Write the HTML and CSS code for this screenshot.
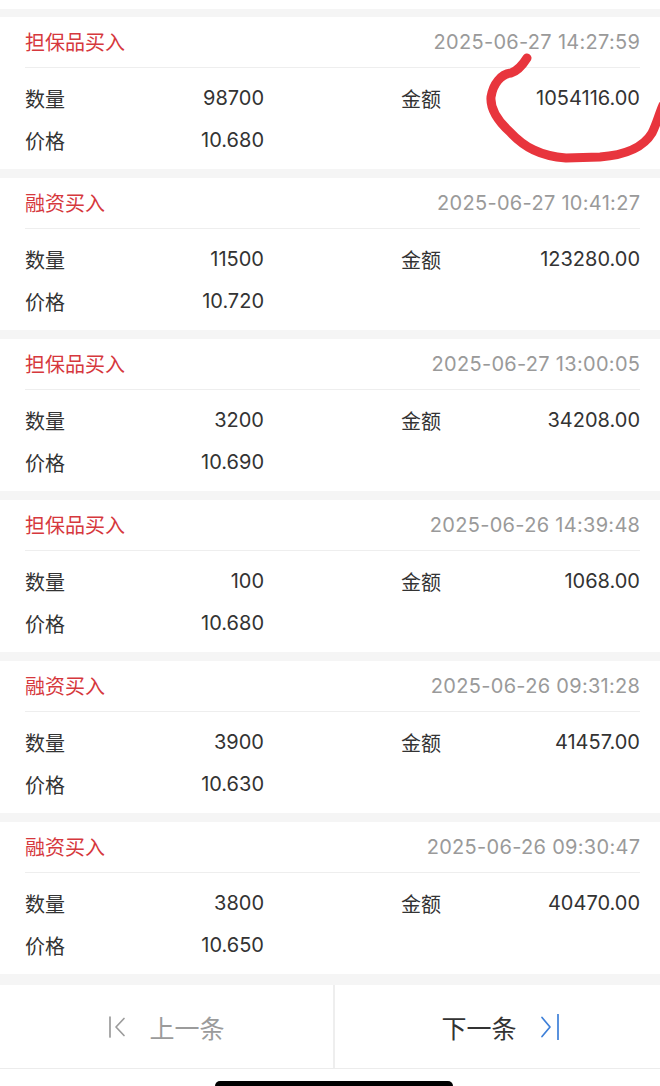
FILE: index.html
```html
<!DOCTYPE html>
<html lang="zh-CN">
<head>
<meta charset="utf-8">
<title>成交明细</title>
<link rel="stylesheet" href="styles.css">
</head>
<body>
<div class="page">
  <div class="prev-end"></div>
  <div class="list">
    <div class="card">
      <div class="card-head"><span class="type">担保品买入</span><span class="time">2025-06-27 14:27:59</span></div>
      <div class="card-body">
        <div class="row"><div class="pair"><span class="label">数量</span><span class="val">98700</span></div><div class="pair"><span class="label">金额</span><span class="val">1054116.00</span></div></div>
        <div class="row"><div class="pair"><span class="label">价格</span><span class="val">10.680</span></div></div>
      </div>
    </div>
    <div class="card">
      <div class="card-head"><span class="type">融资买入</span><span class="time">2025-06-27 10:41:27</span></div>
      <div class="card-body">
        <div class="row"><div class="pair"><span class="label">数量</span><span class="val">11500</span></div><div class="pair"><span class="label">金额</span><span class="val">123280.00</span></div></div>
        <div class="row"><div class="pair"><span class="label">价格</span><span class="val">10.720</span></div></div>
      </div>
    </div>
    <div class="card">
      <div class="card-head"><span class="type">担保品买入</span><span class="time">2025-06-27 13:00:05</span></div>
      <div class="card-body">
        <div class="row"><div class="pair"><span class="label">数量</span><span class="val">3200</span></div><div class="pair"><span class="label">金额</span><span class="val">34208.00</span></div></div>
        <div class="row"><div class="pair"><span class="label">价格</span><span class="val">10.690</span></div></div>
      </div>
    </div>
    <div class="card">
      <div class="card-head"><span class="type">担保品买入</span><span class="time">2025-06-26 14:39:48</span></div>
      <div class="card-body">
        <div class="row"><div class="pair"><span class="label">数量</span><span class="val">100</span></div><div class="pair"><span class="label">金额</span><span class="val">1068.00</span></div></div>
        <div class="row"><div class="pair"><span class="label">价格</span><span class="val">10.680</span></div></div>
      </div>
    </div>
    <div class="card">
      <div class="card-head"><span class="type">融资买入</span><span class="time">2025-06-26 09:31:28</span></div>
      <div class="card-body">
        <div class="row"><div class="pair"><span class="label">数量</span><span class="val">3900</span></div><div class="pair"><span class="label">金额</span><span class="val">41457.00</span></div></div>
        <div class="row"><div class="pair"><span class="label">价格</span><span class="val">10.630</span></div></div>
      </div>
    </div>
    <div class="card">
      <div class="card-head"><span class="type">融资买入</span><span class="time">2025-06-26 09:30:47</span></div>
      <div class="card-body">
        <div class="row"><div class="pair"><span class="label">数量</span><span class="val">3800</span></div><div class="pair"><span class="label">金额</span><span class="val">40470.00</span></div></div>
        <div class="row"><div class="pair"><span class="label">价格</span><span class="val">10.650</span></div></div>
      </div>
    </div>
  </div>
  <div class="nav">
    <div class="nav-btn prev">
      <svg class="nav-icon" width="18" height="26" viewBox="0 0 18 26"><line x1="2" y1="3" x2="2" y2="23"/><polyline points="16,4.5 8,13 16,21.5"/></svg>
      <span>上一条</span>
    </div>
    <div class="nav-btn next">
      <span>下一条</span>
      <svg class="nav-icon" width="20" height="26" viewBox="0 0 20 26"><polyline points="2,3.5 10,13 2,22.5"/><line x1="18" y1="0.5" x2="18" y2="25.5"/></svg>
    </div>
  </div>
  <div class="home-area"><div class="home-bar"></div></div>
  <svg class="scribble" width="660" height="1086" viewBox="0 0 660 1086"><path d="M527,58 C522,66 517,71 511,73 C501,74 493,84 491,97 C490,110 498,121 510,132 C524,147 540,156 566,158 L600,157 C626,155 643,148 652,133 C657,123 659,114 663,105"/></svg>
</div>
</body>
</html>
```

FILE: styles.css
```css
* { box-sizing: border-box; }
html, body { margin: 0; padding: 0; }
body {
  background: #f5f5f5;
  font-family: "Inter", "Noto Sans CJK SC", sans-serif;
  color: #333;
  overflow: hidden;
}
.page {
  position: relative;
  width: 660px;
  height: 1086px;
  overflow: hidden;
}
.prev-end {
  height: 9px;
  background: #fff;
  margin-bottom: 8px;
}
.list {
  display: flex;
  flex-direction: column;
  gap: 9px;
}
.card {
  background: #fff;
  height: 152px;
  padding: 0 20px 0 25px;
}
.card-head {
  height: 51px;
  border-bottom: 1px solid #eeeeee;
  display: flex;
  justify-content: space-between;
  align-items: center;
  padding-bottom: 1px;
}
.type {
  color: #d6383d;
  font-size: 20px;
}
.time {
  color: #9a9a9a;
  font-size: 20px;
  letter-spacing: 0.3px;
  margin-right: -0.3px;
}
.card-body {
  padding-top: 9px;
}
.row {
  height: 42px;
  display: flex;
  justify-content: space-between;
  align-items: center;
}
.pair {
  width: 239px;
  display: flex;
  justify-content: space-between;
  align-items: center;
  font-size: 20px;
}
.label { color: #333; }
.val { color: #333; }
.nav {
  margin-top: 11px;
  height: 84px;
  background: #fff;
  border-bottom: 1px solid #ececec;
  display: flex;
}
.nav-btn {
  display: flex;
  justify-content: center;
  align-items: center;
  gap: 23px;
  font-size: 25px;
}
.nav-btn.prev { color: #9b9b9b; width: 333px; }
.nav-btn.next { color: #333; flex: 1; border-left: 2px solid #eeeeee; }
.nav-btn.next span { margin-left: 6px; }
.nav-icon {
  fill: none;
  stroke-width: 1.7;
  stroke-linecap: round;
  stroke-linejoin: round;
}
.prev .nav-icon { stroke: #9b9b9b; }
.next .nav-icon { stroke: #3d7fd8; }
.home-area {
  height: 18px;
  background: #fff;
  display: flex;
  justify-content: center;
}
.home-bar {
  margin-top: 12px;
  margin-left: 7px;
  width: 238px;
  height: 10px;
  border-radius: 5px;
  background: #000;
}
.scribble {
  position: absolute;
  left: 0;
  top: 0;
  pointer-events: none;
}
.scribble path {
  fill: none;
  stroke: #e8353d;
  stroke-width: 9;
  stroke-linecap: round;
  stroke-linejoin: round;
}
```
